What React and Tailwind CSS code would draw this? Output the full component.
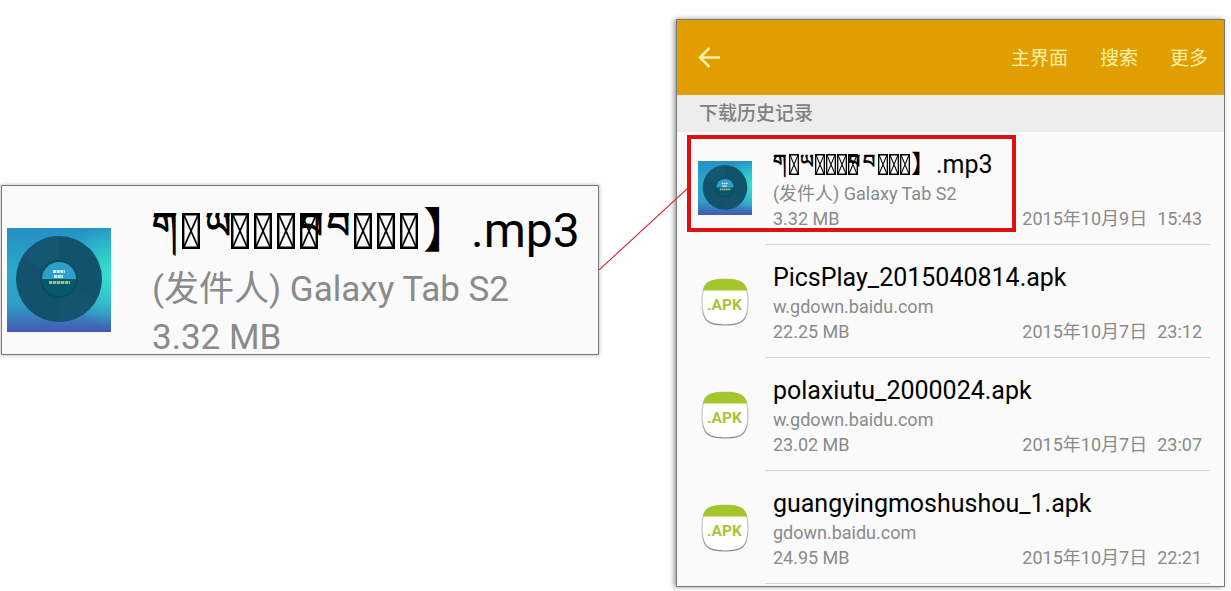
const TITLE_GLYPHS = ["ག", "box", "ཡ", "box", "box", "box", "stack", "བ", "box", "box", "box"];

const LARGE = {
  box: "mr-[5px] h-[36px] w-[18px] shrink-0",
  stack: "relative w-[27px]",
  text: "text-[36px] leading-[36px] h-[46px]",
  widths: { "ག": "w-[30px]", "ཡ": "w-[26px]", "བ": "w-[27px]" },
};

const SMALL = {
  box: "mr-px h-[21px] w-[10px] shrink-0",
  stack: "relative w-[15px]",
  text: "text-[19px] leading-[20px] h-[25px]",
  widths: { "ག": "w-[16px]", "ཡ": "w-[15px]", "བ": "w-[15px]" },
};

function MissingGlyph({ className }) {
  return (
    <svg className={className} viewBox="0 0 18 36" fill="none" stroke="currentColor" strokeWidth="2.4" preserveAspectRatio="none" aria-hidden="true">
      <path d="M1.2 1.2h15.6v33.6h-15.6z" />
      <path d="M1.5 1l15 34M16.5 1l-15 34" strokeWidth="1.8" />
    </svg>
  );
}

function GarbledTitle({ look }) {
  return (
    <span className="inline-flex items-center font-bold">
      {TITLE_GLYPHS.map((g, i) => {
        if (g === "box") return <MissingGlyph key={i} className={look.box} />;
        if (g === "stack")
          return (
            <span key={i} className={`flex items-center ${look.stack}`}>
              <span className={look.text}>བ</span>
              <span className="absolute inset-0 flex items-center">
                <MissingGlyph className={look.box} />
              </span>
            </span>
          );
        return <span key={i} className={`${look.text} ${look.widths[g]}`}>{g}</span>;
      })}
    </span>
  );
}

function Disc({ className, id }) {
  return (
    <svg className={className} viewBox="0 0 104 104" aria-hidden="true">
      <defs>
        <linearGradient id={`${id}-v`} x1="0" y1="0" x2="0" y2="1">
          <stop offset="0" stopColor="#258fc4" />
          <stop offset="0.4" stopColor="#2aa8cb" />
          <stop offset="0.75" stopColor="#319bc7" />
          <stop offset="1" stopColor="#4358b2" />
        </linearGradient>
        <radialGradient id={`${id}-r`} cx="1" cy="0.45" r="0.5">
          <stop offset="0" stopColor="#35e2d0" />
          <stop offset="1" stopColor="#35e2d0" stopOpacity="0" />
        </radialGradient>
      </defs>
      <rect width="104" height="104" fill={`url(#${id}-v)`} />
      <rect width="104" height="104" fill={`url(#${id}-r)`} />
      <circle cx="52" cy="51" r="43" fill="#12526d" />
      <path d="M52 51V8A43 43 0 0 0 15 30Z" fill="#155773" />
      <path d="M52 51V94A43 43 0 0 0 89 72Z" fill="#14546f" />
      <circle cx="52" cy="51" r="19" fill="#0d4a63" />
      <circle cx="52" cy="51" r="17" fill="#07596a" />
      <path d="M35 51a17 17 0 0 1 34 0Z" fill="#2c9fca" />
      <path d="M46 43.5h12M47 48.5h9" stroke="#d3edf3" strokeWidth="3" strokeDasharray="3 0.7" />
      <path d="M42 54.5h21" stroke="#9fbd82" strokeWidth="3.2" strokeDasharray="3.4 0.6" />
    </svg>
  );
}

function ApkIcon({ id }) {
  return (
    <svg className="h-12 w-12" viewBox="0 0 48 48" aria-hidden="true">
      <defs>
        <linearGradient id={id} x1="0" y1="0" x2="0" y2="1">
          <stop offset="0" stopColor="#c9cfc0" />
          <stop offset="0.6" stopColor="#c4c4c4" />
          <stop offset="1" stopColor="#858585" />
        </linearGradient>
      </defs>
      <path d="M24 1C42 1 47 6 47 24S42 47 24 47 1 42 1 24 6 1 24 1Z" fill="#fff" stroke={`url(#${id})`} strokeWidth="1.2" />
      <path d="M1.8 12.5C4 3 10 1 24 1s20 2 22.2 11.5Z" fill="#a4c62c" />
      <text x="23.5" y="31.5" textAnchor="middle" fontFamily="Roboto, sans-serif" fontWeight="700" fontSize="15.5" fill="#a4c639">.APK</text>
    </svg>
  );
}

const FILES = [
  { title: null, from: "(发件人) Galaxy Tab S2", size: "3.32 MB", date: "2015年10月9日", time: "15:43" },
  { title: "PicsPlay_2015040814.apk", from: "w.gdown.baidu.com", size: "22.25 MB", date: "2015年10月7日", time: "23:12" },
  { title: "polaxiutu_2000024.apk", from: "w.gdown.baidu.com", size: "23.02 MB", date: "2015年10月7日", time: "23:07" },
  { title: "guangyingmoshushou_1.apk", from: "gdown.baidu.com", size: "24.95 MB", date: "2015年10月7日", time: "22:21" },
];

function FileRow({ file, index }) {
  return (
    <li className="relative flex">
      <div className="flex w-22 shrink-0 justify-center pt-[29px] pl-2">
        {file.title ? (
          <div className="pt-1">
            <ApkIcon id={`apk-${index}`} />
          </div>
        ) : (
          <Disc id="disc-small" className="h-[54px] w-[54px]" />
        )}
      </div>
      <div className="mr-[14px] min-w-0 grow border-b border-[#d6d6d6] pt-4 pb-[13px] pl-2 whitespace-nowrap">
        <h3 className="flex h-[33px] items-center text-[25px] leading-8 text-black">
          {file.title || (
            <>
              <GarbledTitle look={SMALL} />
              <span>】.mp3</span>
            </>
          )}
        </h3>
        <p className="text-[18px] leading-[25px] text-[#8a8a8a]">{file.from}</p>
        <p className="flex justify-between pr-2 text-[18px] leading-[25px] text-[#8a8a8a]">
          <span>{file.size}</span>
          <span className="flex gap-[10px]">
            <span>{file.date}</span>
            <span>{file.time}</span>
          </span>
        </p>
      </div>
      {index === 0 && (
        <div className="pointer-events-none absolute top-[3px] left-[10px] h-[97px] w-[329px] border-4 border-[#e01010]" />
      )}
    </li>
  );
}

export default function App() {
  return (
    <main className="flex items-start bg-white pt-[19px] pr-[6px] pb-1 pl-px font-['Roboto','Noto_Sans_CJK_SC',sans-serif]">
      <section className="mt-[166px] flex min-w-0 flex-[598] border border-[#777] bg-[#fafafa] whitespace-nowrap shadow-[0_0_4px_rgba(0,0,0,0.3)]">
        <Disc id="disc-large" className="mt-[42px] ml-[5px] h-[104px] w-[104px] shrink-0" />
        <div className="pl-[41px]">
          <h2 className="flex h-[73px] items-center pt-4 text-[48px] leading-[52px] text-black">
            <GarbledTitle look={LARGE} />
            <span>】.mp3</span>
          </h2>
          <p className="text-[35px] leading-[62px] text-[#8a8a8a]">(发件人) Galaxy Tab S2</p>
          <p className="pt-px text-[35px] leading-8 text-[#8a8a8a]">3.32 MB</p>
        </div>
      </section>
      <div className="relative z-10 w-[77px] shrink-0">
        <svg className="absolute top-[169px] left-0 h-[82px] w-[89px]" viewBox="0 0 89 82" fill="none" aria-hidden="true">
          <path d="M0 82L89 0" stroke="#d8232a" strokeWidth="1.1" />
        </svg>
      </div>
      <section className="min-w-0 flex-[549] border border-[#777] bg-[#fafafa] pb-[2px] shadow-[-2px_0_5px_rgba(0,0,0,0.4)]">
        <header className="flex h-[75px] items-center justify-between bg-[#e09e00] pt-[3px] pr-4 pl-5 text-[19px] text-[#fff2a8]">
          <button type="button" aria-label="返回">
            <svg className="h-6 w-6" viewBox="0 0 24 24" fill="none" stroke="#fff2a8" strokeWidth="2.5" aria-hidden="true">
              <path d="M12.5 1L3 10.5l9.5 9.5M3 10.5h20" />
            </svg>
          </button>
          <nav className="flex gap-8">
            <button type="button">主界面</button>
            <button type="button">搜索</button>
            <button type="button">更多</button>
          </nav>
        </header>
        <h2 className="bg-[#ededed] pl-[22px] text-[19px] leading-[37px] font-medium text-[#808080]">下载历史记录</h2>
        <ul>
          {FILES.map((f, i) => (
            <FileRow key={i} file={f} index={i} />
          ))}
        </ul>
      </section>
    </main>
  );
}
